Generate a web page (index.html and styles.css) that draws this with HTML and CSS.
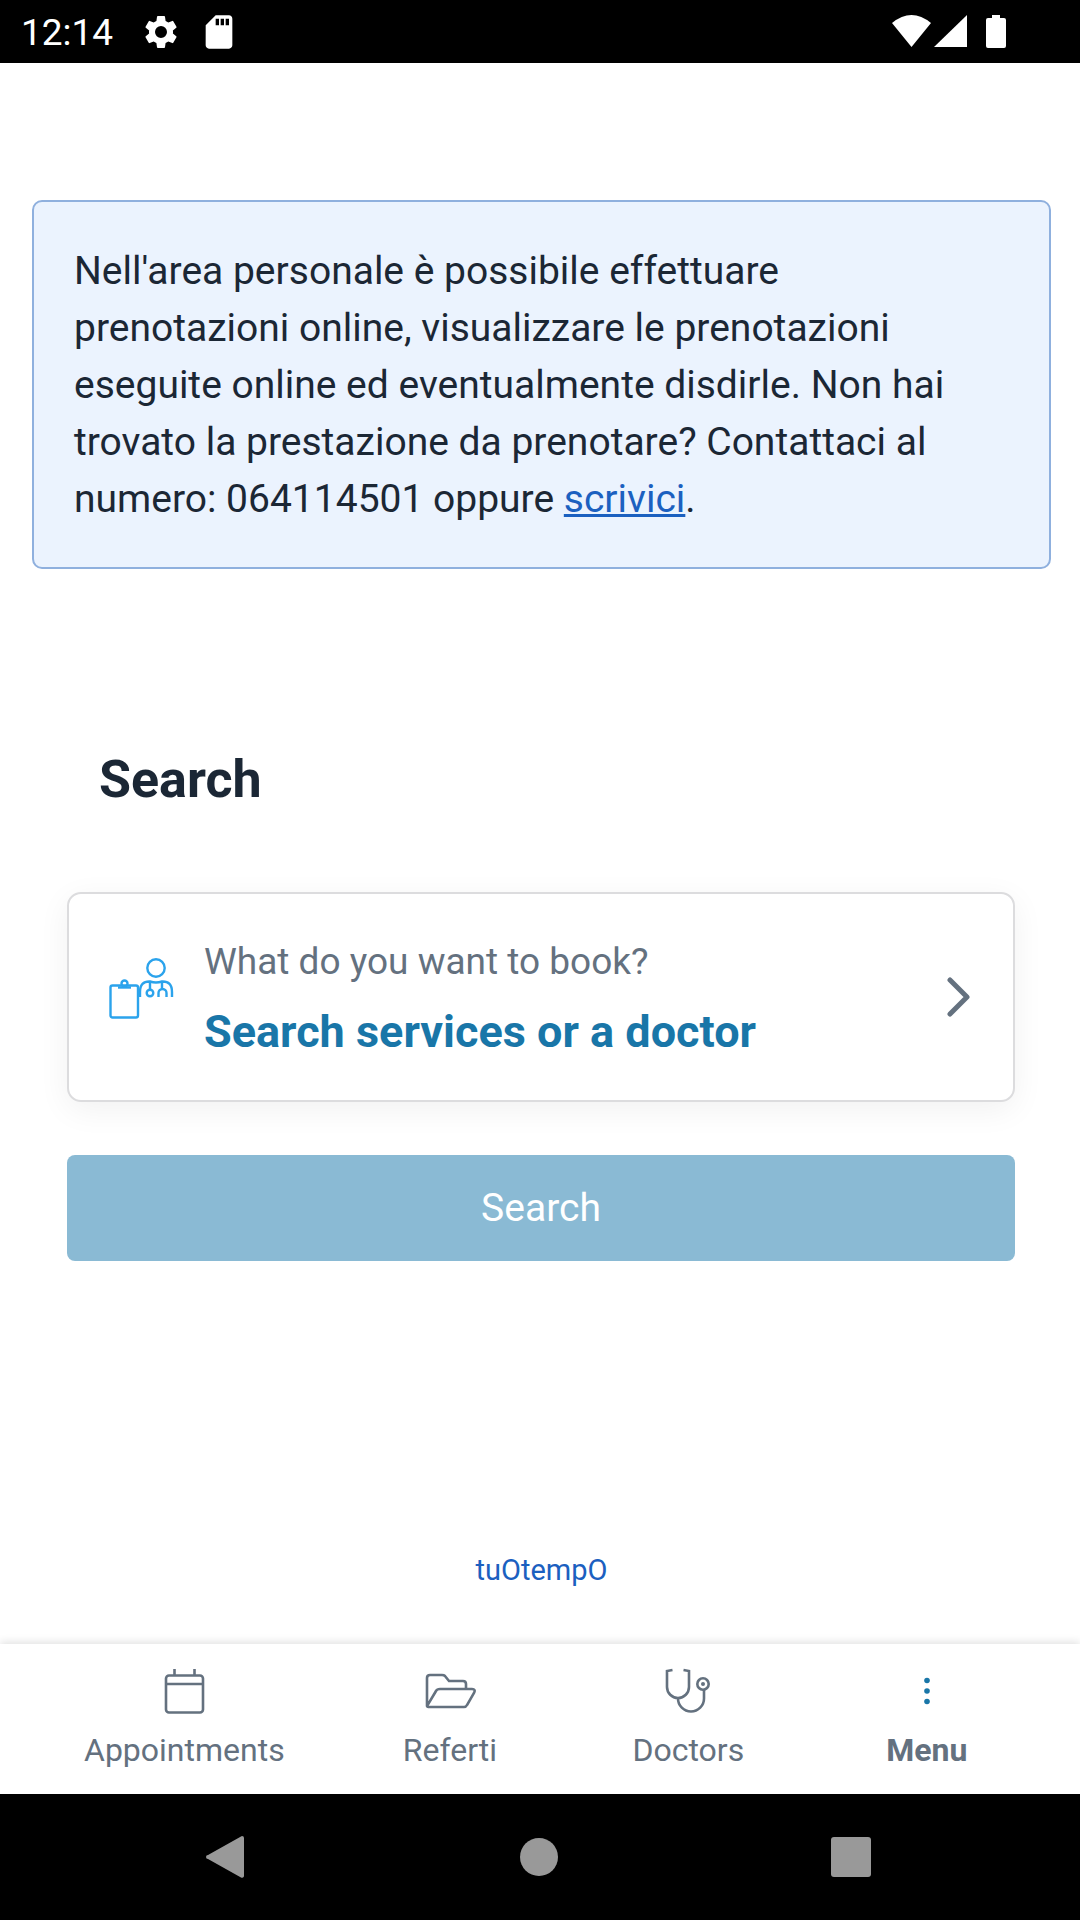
FILE: index.html
```html
<!DOCTYPE html>
<html lang="en">
<head>
<meta charset="utf-8">
<meta name="viewport" content="width=device-width, initial-scale=1">
<title>Search</title>
<link rel="stylesheet" href="styles.css">
</head>
<body>
<div class="screen">
  <header class="status">
    <div class="status-group">
      <time class="clock">12:14</time>
      <svg class="status-icon" viewBox="0 0 24 24" aria-hidden="true"><path d="M19.14 12.94c.04-.3.06-.61.06-.94 0-.32-.02-.64-.07-.94l2.03-1.58a.49.49 0 0 0 .12-.61l-1.92-3.32a.49.49 0 0 0-.59-.22l-2.39.96c-.5-.38-1.03-.7-1.62-.94l-.36-2.54a.48.48 0 0 0-.48-.41h-3.84c-.24 0-.43.17-.47.41l-.36 2.54c-.59.24-1.13.57-1.62.94l-2.39-.96a.48.48 0 0 0-.59.22L2.74 8.87a.48.48 0 0 0 .12.61l2.03 1.58c-.05.3-.09.63-.09.94s.02.64.07.94l-2.03 1.58a.49.49 0 0 0-.12.61l1.92 3.32c.12.22.37.29.59.22l2.39-.96c.5.38 1.03.7 1.62.94l.36 2.54c.05.24.24.41.48.41h3.84c.24 0 .44-.17.47-.41l.36-2.54c.59-.24 1.13-.56 1.62-.94l2.39.96c.22.08.47 0 .59-.22l1.92-3.32a.48.48 0 0 0-.12-.61zM12 15.6a3.6 3.6 0 1 1 0-7.2 3.6 3.6 0 0 1 0 7.2z"/></svg>
      <svg class="status-icon" viewBox="0 0 24 24" aria-hidden="true"><path d="M18 2h-8L4.02 8 4 20c0 1.100.9 2 2 2h12c1.100 0 2-.9 2-2V4c0-1.100-.9-2-2-2zm-6 6h-2V4h2zm3 0h-2V4h2zm3 0h-2V4h2z"/></svg>
    </div>
    <svg class="status-signals" viewBox="0 0 116 36" aria-hidden="true"><path d="M0 9Q19.500-7 39 9L19.500 33z"/><path d="M75 1v32H42z"/><path d="M100 1h8v3h4a2 2 0 0 1 2 2v26a2 2 0 0 1-2 2H96a2 2 0 0 1-2-2V6a2 2 0 0 1 2-2h4z"/></svg>
  </header>

  <main class="content">
    <p class="notice" lang="it">Nell'area personale è possibile effettuare prenotazioni online, visualizzare le prenotazioni eseguite online ed eventualmente disdirle. Non hai trovato la prestazione da prenotare? Contattaci al numero: 064114501 oppure <a class="notice-link" href="#scrivici">scrivici</a>.</p>

    <section class="booking">
      <h1 class="title">Search</h1>
      <button class="picker" type="button">
        <svg class="picker-icon" viewBox="0 0 66 62" aria-hidden="true"><circle cx="47" cy="10" r="8.700"/><path d="M31 39V34Q31 23 41 23.500Q47 25.500 53 23.500Q63 23 63 34V39M41 24v9M53 24v6M49.500 39V35a4 4 0 0 1 8 0v4"/><circle cx="41" cy="35" r="3.300"/><rect x="1.500" y="27.500" width="27.500" height="32" rx="2"/><path d="M9 29.500h13"/><circle cx="15.500" cy="25.500" r="3"/></svg>
        <span class="picker-text">
          <span class="picker-label">What do you want to book?</span>
          <span class="picker-value">Search services or a doctor</span>
        </span>
        <svg class="chevron" viewBox="0 0 24 40" aria-hidden="true"><path d="M3 3l17 17L3 37"/></svg>
      </button>
      <button class="submit" type="submit">Search</button>
    </section>

    <footer class="credit"><a class="credit-link" href="#tuotempo">tuOtempO</a></footer>
  </main>

  <nav class="tabs">
    <a class="tab" href="#appointments">
      <svg class="tab-icon" viewBox="0 0 52 48" aria-hidden="true"><rect x="8" y="8.500" width="37" height="37" rx="3"/><path d="M8 17h37M16.500 2v6M36.500 2v6"/></svg>
      Appointments
    </a>
    <a class="tab" href="#referti">
      <svg class="tab-icon" viewBox="0 0 52 48" aria-hidden="true"><path d="M3 39V11q0-3 3-3h12q2 0 3 1l4 5h14q3 0 3 3v5M3 39q0 1 3 1h34q2 0 3-2l7-12q2-4-2-4H16q-3 0-4 2z"/></svg>
      Referti
    </a>
    <a class="tab" href="#doctors">
      <svg class="tab-icon" viewBox="0 0 52 48" aria-hidden="true"><path d="M10.500 3L5 4V20a11 11 0 0 0 22 0V4L21.500 3M16 31.500a13 13 0 0 0 26 0V23"/><circle cx="41" cy="17" r="5.700"/><circle class="dot" cx="41" cy="17" r="2"/></svg>
      Doctors
    </a>
    <a class="tab tab-menu" href="#menu">
      <svg class="tab-icon tab-icon-menu" viewBox="0 0 52 48" aria-hidden="true"><circle cx="26" cy="13.500" r="2.800"/><circle cx="26" cy="24" r="2.800"/><circle cx="26" cy="34.500" r="2.800"/></svg>
      Menu
    </a>
  </nav>

  <div class="system">
    <button class="system-key" type="button" aria-label="Back"><svg class="system-icon" viewBox="0 0 44 44"><path d="M38 1a2 2 0 0 1 2 2V41a2 2 0 0 1-3 1.500L4 24a2 2 0 0 1 0-4L37 1.500z"/></svg></button>
    <button class="system-key" type="button" aria-label="Home"><svg class="system-icon" viewBox="0 0 44 44"><circle cx="22" cy="22" r="19"/></svg></button>
    <button class="system-key" type="button" aria-label="Recent apps"><svg class="system-icon" viewBox="0 0 44 44"><rect x="1" y="2" width="40" height="40" rx="3"/></svg></button>
  </div>
</div>
</body>
</html>
```
FILE: styles.css
```css
* {
  box-sizing: border-box;
}

body {
  margin: 0;
  background: #fff;
  color: #1b2735;
  font-family: Roboto, "Liberation Sans", sans-serif;
}

button {
  font-family: inherit;
  cursor: pointer;
}

.screen {
  display: flex;
  flex-direction: column;
  min-height: 100vh;
}

/* Status bar */
.status {
  display: flex;
  align-items: center;
  justify-content: space-between;
  height: 63px;
  padding: 0 72px 0 21px;
  background: #000;
  color: #fff;
}

.status-group {
  display: flex;
  align-items: center;
  gap: 18px;
}

.clock {
  margin-right: 10px;
  padding-top: 2px;
  font-size: 37px;
  line-height: 48px;
}

.status-icon {
  width: 40px;
  height: 40px;
  fill: #fff;
}

.status-signals {
  width: 116px;
  height: 36px;
  fill: #fff;
}

/* Page content */
.content {
  display: flex;
  flex: 1;
  flex-direction: column;
  padding: 137px 29px 0 32px;
}

.notice {
  margin: 0;
  padding: 41px 80px 39px 40px;
  border: 2px solid #8fb0de;
  border-radius: 10px;
  background: #ebf3fe;
  font-size: 39px;
  line-height: 57px;
}

.notice-link {
  color: #1b60c0;
  text-decoration-thickness: 3px;
}

.booking {
  display: flex;
  flex-direction: column;
  padding: 177px 36px 0 35px;
}

.title {
  margin: 0 0 78px 32px;
  font-size: 52px;
  line-height: 68px;
}

.picker {
  display: flex;
  align-items: center;
  gap: 29px;
  padding: 40px 40px 36px;
  border: 2px solid #dcdcde;
  border-radius: 14px;
  background: #fff;
  box-shadow: 0 8px 32px rgba(0, 0, 0, 0.06);
  text-align: left;
}

.picker-icon {
  width: 66px;
  height: 62px;
  margin-bottom: 20px;
  fill: none;
  stroke: #2ba3ec;
  stroke-width: 2.400;
}

.picker-text {
  display: flex;
  flex: 1;
  flex-direction: column;
  gap: 10px;
}

.picker-label {
  color: #64717f;
  font-size: 37px;
  line-height: 56px;
}

.picker-value {
  color: #1976a8;
  font-size: 45px;
  font-weight: 700;
  line-height: 64px;
}

.chevron {
  width: 24px;
  height: 40px;
  margin: 0 2px 4px 0;
  fill: none;
  stroke: #64717f;
  stroke-linecap: round;
  stroke-linejoin: round;
  stroke-width: 5;
}

.submit {
  margin-top: 53px;
  padding: 25px;
  border: 0;
  border-radius: 8px;
  background: #8abad4;
  color: #fff;
  font-size: 39px;
  line-height: 56px;
}

.credit {
  margin-top: auto;
  padding-bottom: 54px;
  text-align: center;
}

.credit-link {
  color: #1b60c0;
  font-size: 29px;
  line-height: 40px;
  text-decoration: none;
}

/* Bottom tabs */
.tabs {
  display: flex;
  padding: 23px 34px 24px 38px;
  background: #fff;
  box-shadow: 0 -2px 8px rgba(0, 0, 0, 0.12);
}

.tab {
  display: flex;
  flex: 1 1 0;
  flex-direction: column;
  align-items: center;
  gap: 15px;
  padding: 0 46px;
  color: #64717f;
  font-size: 32px;
  line-height: 40px;
  text-decoration: none;
}

.tab-menu {
  font-weight: 700;
}

.tab-icon {
  width: 52px;
  height: 48px;
  fill: none;
  stroke: #64717f;
  stroke-width: 2.600;
}

.dot {
  fill: #64717f;
  stroke: none;
}

.tab-icon-menu {
  fill: #1976a8;
  stroke: none;
}

/* System navigation */
.system {
  display: grid;
  grid-template-columns: repeat(3, 1fr);
  height: 126px;
  padding: 0 71px 0 69px;
  background: #000;
}

.system-key {
  display: flex;
  align-items: center;
  justify-content: center;
  padding: 0;
  border: 0;
  background: none;
}

.system-icon {
  width: 44px;
  height: 44px;
  fill: #999;
}
```
